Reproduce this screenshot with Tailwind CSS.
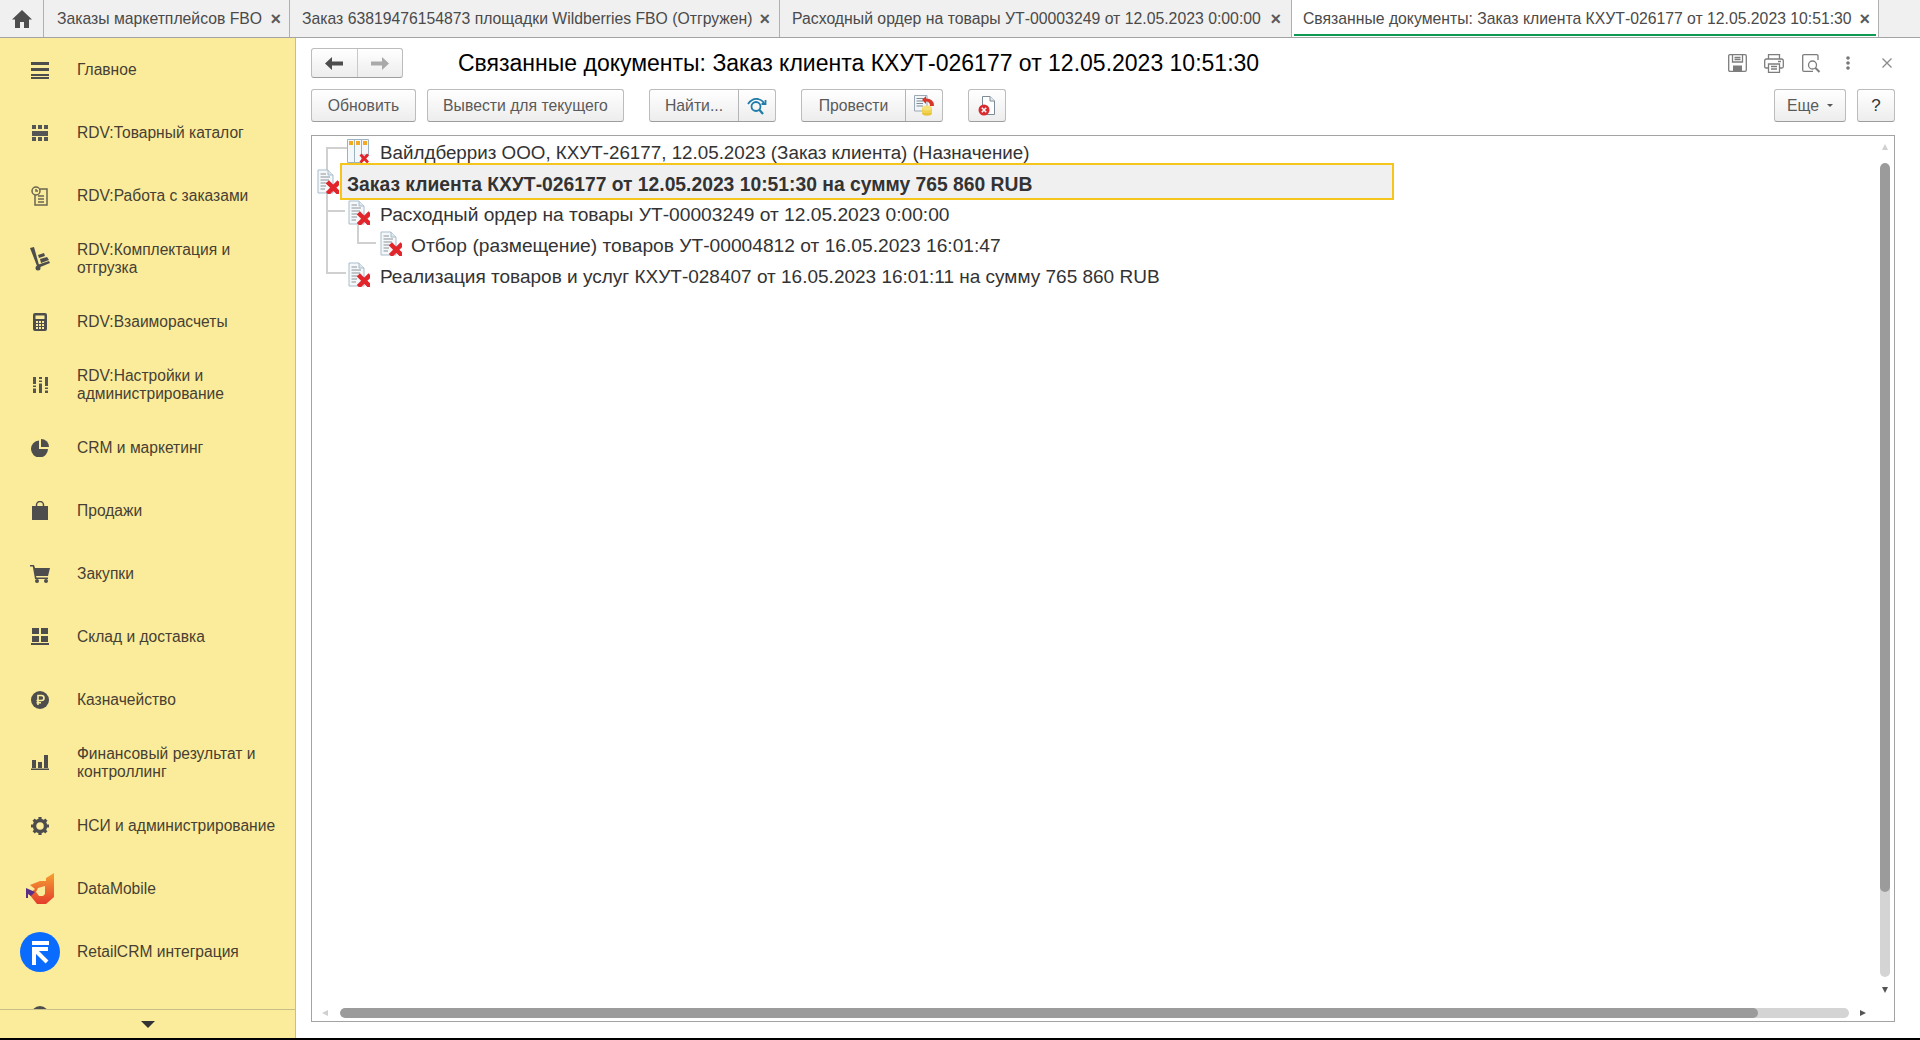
<!DOCTYPE html>
<html lang="ru">
<head>
  <meta charset="UTF-8">
  <title>Связанные документы</title>
  <script src="https://cdn.jsdelivr.net/npm/@tailwindcss/browser@4"></script>
</head>
<body class="w-[1920px] h-[1040px] overflow-hidden flex flex-col bg-white font-['Liberation_Sans',Arial,sans-serif]">
  <svg width="0" height="0" class="absolute">
    <defs>
      <symbol id="doc" viewBox="0 0 22 25">
        <path d="M1 1H11L16 6V24H1Z" fill="#f4f8fb" stroke="#a9bccb"/>
        <path d="M11 1V6H16" fill="#dfe7ee" stroke="#a9bccb"/>
        <path d="M3.5 5H9M3.5 8H13M3.5 11H12M3.5 14H10M3.5 17H9M3.5 20H8" stroke="#8b9298" stroke-width="1.2"/>
        <path d="M12 14.500L20.500 23M20.500 14.500L12 23" stroke="#e2252b" stroke-width="4.500" stroke-linecap="square"/>
      </symbol>
      <symbol id="columns" viewBox="0 0 22 24">
        <path d="M.5.5H7.500V23.500H.5ZM7.500.5H14.500V23.500H7.500ZM14.500.5H21.500V16H14.500Z" fill="#f5f8fa" stroke="#9fb2c0"/>
        <path d="M2 2H6V6H2ZM9 2H13V6H9ZM16 2H20V6H16Z" fill="#f4a91f"/>
        <path d="M13.500 15.500L21 23.500M21 15.500L13.500 23.500" stroke="#e2252b" stroke-width="2.800"/>
      </symbol>
    </defs>
  </svg>

  <!-- вкладки -->
  <div class="h-[38px] shrink-0 flex bg-[#f0f0f0] border-b border-[#a3a3a3] text-[15.750px] text-[#4a4a4a]">
    <div class="w-[44px] flex items-center justify-center border-r border-[#b0b0b0]">
      <svg width="20" height="18" viewBox="0 0 20 18" fill="#4d4d4d"><path d="M10 0L20 9.500H17V18H12V12H8V18H3V9.500H0Z"/></svg>
    </div>
    <div class="w-[246px] flex items-center justify-between pl-[13px] pr-[8px] border-r border-[#b0b0b0]">
      <span>Заказы маркетплейсов FBO</span><span class="text-[18px] font-bold text-[#5a5a5a] leading-none">×</span>
    </div>
    <div class="w-[490px] flex items-center justify-between pl-[12px] pr-[9px] border-r border-[#b0b0b0]">
      <span>Заказ 63819476154873 площадки Wildberries FBO (Отгружен)</span><span class="text-[18px] font-bold text-[#5a5a5a] leading-none">×</span>
    </div>
    <div class="w-[512px] flex items-center justify-between pl-[12px] pr-[10px] border-r border-[#b0b0b0]">
      <span class="text-[15.800px]">Расходный ордер на товары УТ-00003249 от 12.05.2023 0:00:00</span><span class="text-[18px] font-bold text-[#5a5a5a] leading-none">×</span>
    </div>
    <div class="w-[587px] relative bg-white flex items-center justify-between pl-[11px] pr-[8px] border-r border-[#b0b0b0]">
      <span>Связанные документы: Заказ клиента КХУТ-026177 от 12.05.2023 10:51:30</span><span class="text-[18px] font-bold text-[#5a5a5a] leading-none">×</span>
      <div class="absolute left-[2px] right-[2px] bottom-[1px] h-[2px] bg-[#0f9a54]"></div>
    </div>
  </div>

  <div class="flex-1 flex min-h-0">
    <!-- боковая панель -->
    <aside class="w-[296px] shrink-0 flex flex-col bg-[#fbec9c] border-r border-[#c9bf86] text-[15.600px] leading-[18px] text-[#473f33]">
      <nav class="flex-1 overflow-hidden">
        <a class="h-[63px] flex items-center pl-[20px] gap-[17px]"><span class="w-[40px] h-[40px] flex items-center justify-center">
          <svg width="18" height="18" viewBox="0 0 18 18" fill="#4d4d4d"><path d="M0 1H18V4H0ZM0 7H18V10H0ZM0 13H18V15H0ZM0 16H18V18H0Z"/></svg>
        </span>Главное</a>
        <a class="h-[63px] flex items-center pl-[20px] gap-[17px]"><span class="w-[40px] h-[40px] flex items-center justify-center">
          <svg width="16" height="16" viewBox="0 0 16 16" fill="#555"><path d="M0 0H4V4H0ZM6 0H10V4H6ZM12 0H16V4H12ZM0 6H16V11H0ZM0 12H4V16H0ZM6 12H10V16H6ZM12 12H16V16H12Z"/></svg>
        </span>RDV:Товарный каталог</a>
        <a class="h-[63px] flex items-center pl-[20px] gap-[17px]"><span class="w-[40px] h-[40px] flex items-center justify-center">
          <svg width="18" height="20" viewBox="0 0 18 20" fill="none" stroke="#6b6650" stroke-width="1.500"><circle cx="5" cy="5" r="4"/><path d="M5 3V5H7M9 3H16V19H4V9M7 10H13M7 13H13M7 16H13"/></svg>
        </span>RDV:Работа с заказами</a>
        <a class="h-[63px] flex items-center pl-[20px] gap-[17px]"><span class="w-[40px] h-[40px] flex items-center justify-center">
          <svg width="20" height="24" viewBox="0 0 20 24" fill="#4d4d4d"><path d="M0 1L4 0L9 18L7 19Z"/><path d="M7 18L19 14L20 16L8 21Z"/><circle cx="8" cy="21" r="2.500"/><path d="M8 8L14 6L15 9L9 11ZM10 12L17 10L19 13L11 16Z"/></svg>
        </span><span>RDV:Комплектация и<br>отгрузка</span></a>
        <a class="h-[63px] flex items-center pl-[20px] gap-[17px]"><span class="w-[40px] h-[40px] flex items-center justify-center">
          <svg width="14" height="18" viewBox="0 0 14 18" fill="#4d4d4d" fill-rule="evenodd"><path d="M2 0H12Q14 0 14 2V16Q14 18 12 18H2Q0 18 0 16V2Q0 0 2 0ZM2.500 2.500V6H11.500V2.500ZM3 8V10H5V8ZM6 8V10H8V8ZM9 8V10H11V8ZM3 11V13H5V11ZM6 11V13H8V11ZM9 11V13H11V11ZM3 14V16H5V14ZM6 14V16H8V14ZM9 14V16H11V14Z"/></svg>
        </span>RDV:Взаиморасчеты</a>
        <a class="h-[63px] flex items-center pl-[20px] gap-[17px]"><span class="w-[40px] h-[40px] flex items-center justify-center">
          <svg width="15" height="16" viewBox="0 0 15 16" fill="#555"><path d="M0 0H3V7H0ZM0 8.500H3V10H0ZM0 11.500H3V16H0ZM6 0H9V2H6ZM6 3.500H9V5H6ZM6 6.500H9V16H6ZM12 0H15V9H12ZM12 10.500H15V12H12ZM12 13.500H15V16H12Z"/></svg>
        </span><span>RDV:Настройки и<br>администрирование</span></a>
        <a class="h-[63px] flex items-center pl-[20px] gap-[17px]"><span class="w-[40px] h-[40px] flex items-center justify-center">
          <svg width="18" height="18" viewBox="0 0 18 18" fill="#4d4d4d"><path d="M8 1.500V10H17A8.500 8.500 0 1 1 8 1.500Z"/><path d="M10 0A8 8 0 0 1 18 8H10Z"/></svg>
        </span>CRM и маркетинг</a>
        <a class="h-[63px] flex items-center pl-[20px] gap-[17px]"><span class="w-[40px] h-[40px] flex items-center justify-center">
          <svg width="16" height="19" viewBox="0 0 16 19" fill="#4d4d4d"><path d="M0 5H16V19H0Z"/><path d="M4.500 7V4A3.500 3.500 0 0 1 11.500 4V7" fill="none" stroke="#4d4d4d" stroke-width="1.500"/></svg>
        </span>Продажи</a>
        <a class="h-[63px] flex items-center pl-[20px] gap-[17px]"><span class="w-[40px] h-[40px] flex items-center justify-center">
          <svg width="20" height="18" viewBox="0 0 20 18" fill="#4d4d4d"><path d="M0 0H4L5 3H20L18 11H6L6.500 12.500H18V14H5L2.800 1.500H0Z"/><circle cx="7" cy="16" r="2"/><circle cx="16" cy="16" r="2"/></svg>
        </span>Закупки</a>
        <a class="h-[63px] flex items-center pl-[20px] gap-[17px]"><span class="w-[40px] h-[40px] flex items-center justify-center">
          <svg width="18" height="17" viewBox="0 0 18 17" fill="#4d4d4d"><path d="M1 0H8V6H1ZM10 0H17V6H10ZM1 8H8V14H1ZM10 8H17V14H10ZM0 15H18V17H0Z"/></svg>
        </span>Склад и доставка</a>
        <a class="h-[63px] flex items-center pl-[20px] gap-[17px]"><span class="w-[40px] h-[40px] flex items-center justify-center">
          <svg width="18" height="18" viewBox="0 0 18 18"><circle cx="9" cy="9" r="9" fill="#4d4d4d"/><path d="M7 14V4.500H10.500A2.500 2.500 0 0 1 10.500 9.500H5.500M5.500 11.700H10" fill="none" stroke="#fbec9c" stroke-width="1.600"/></svg>
        </span>Казначейство</a>
        <a class="h-[63px] flex items-center pl-[20px] gap-[17px]"><span class="w-[40px] h-[40px] flex items-center justify-center">
          <svg width="18" height="15" viewBox="0 0 18 15" fill="#4d4d4d"><path d="M1 5H5V13H1ZM7 7H11V13H7ZM13 0H17V13H13ZM0 13.500H18V15H0Z"/></svg>
        </span><span>Финансовый результат и<br>контроллинг</span></a>
        <a class="h-[63px] flex items-center pl-[20px] gap-[17px]"><span class="w-[40px] h-[40px] flex items-center justify-center">
          <svg width="18" height="18" viewBox="0 0 18 18"><circle cx="9" cy="9" r="5.500" fill="none" stroke="#4d4d4d" stroke-width="3.500"/><path d="M9 0V18M0 9H18M2.600 2.600L15.400 15.400M15.400 2.600L2.600 15.400" stroke="#4d4d4d" stroke-width="3.200" stroke-dasharray="3.500 11 3.500 11"/></svg>
        </span>НСИ и администрирование</a>
        <a class="h-[63px] flex items-center pl-[20px] gap-[17px]"><span class="w-[40px] h-[40px] flex items-center justify-center">
          <svg width="28" height="32" viewBox="0 0 28 32">
            <defs><linearGradient id="dm" x1="0" y1="0" x2="0" y2="1"><stop offset="0" stop-color="#f5a133"/><stop offset="1" stop-color="#e43d2c"/></linearGradient></defs>
            <path fill="url(#dm)" fill-rule="evenodd" d="M28 0V24L20 31H11L3 21L9 16L4 12L14 8H20V5ZM12 15L19 13V21L17 23H13L10 19Z"/>
            <path fill="#5b2f86" d="M0 15L9 19L5 23L2 21V25L0 25Z"/>
          </svg>
        </span>DataMobile</a>
        <a class="h-[63px] flex items-center pl-[20px] gap-[17px]"><span class="w-[40px] h-[40px] flex items-center justify-center">
          <svg width="40" height="40" viewBox="0 0 40 40"><circle cx="20" cy="20" r="20" fill="#0a6cff"/><path d="M12 9H29V13H12Z" fill="#fff"/><path d="M14 34V18H28M14 18L27 31" transform="translate(0 -1)" fill="none" stroke="#fff" stroke-width="4"/></svg>
        </span>RetailCRM интеграция</a>
        <a class="h-[63px] flex items-center pl-[20px] gap-[17px]"><span class="w-[40px] h-[40px] flex items-center justify-center">
          <svg width="18" height="18" viewBox="0 0 18 18"><circle cx="9" cy="9" r="9" fill="#4d4d4d"/></svg>
        </span></a>
      </nav>
      <div class="h-[29px] shrink-0 flex items-center justify-center border-t border-[#c9bf86]">
        <span class="w-0 h-0 border-x-[7px] border-x-transparent border-t-[7px] border-t-[#333]"></span>
      </div>
    </aside>

    <!-- форма -->
    <main class="flex-1 min-w-0 flex flex-col pl-[15px] pr-[25px] pt-[10px] pb-[16px]">
      <div class="h-[30px] shrink-0 flex items-center">
        <div class="w-[92px] h-[30px] flex rounded-[3px] border border-[#bcbcbc] border-b-[#9d9d9d] bg-gradient-to-b from-white to-[#ededed]">
          <span class="flex-1 flex items-center justify-center border-r border-[#c9c9c9]">
            <svg width="18" height="13" viewBox="0 0 18 13" fill="#4d4d4d"><path d="M7 0V4.500H18V8.500H7V13L0 6.500Z"/></svg>
          </span>
          <span class="flex-1 flex items-center justify-center">
            <svg width="18" height="13" viewBox="0 0 18 13" fill="#a9a9a9"><path d="M11 0V4.500H0V8.500H11V13L18 6.500Z"/></svg>
          </span>
        </div>
        <h1 class="ml-[55px] text-[23px] font-normal text-black whitespace-nowrap">Связанные документы: Заказ клиента КХУТ-026177 от 12.05.2023 10:51:30</h1>
        <div class="ml-auto flex items-center">
          <span class="w-[37px] flex justify-center">
            <svg width="19" height="18" viewBox="0 0 19 18" fill="none" stroke="#7d7d7d" stroke-width="1.300"><path d="M2 .7H17Q18.300 .7 18.300 2V16Q18.300 17.300 17 17.300H2Q.7 17.300 .7 16V2Q.7 .7 2 .7Z"/><path d="M4.500 1V8H14.500V1M6.500 3.500H12.500M6.500 5.500H12.500"/><path d="M5 11.500H14V17H5Z" fill="#7d7d7d" stroke="none"/></svg>
          </span>
          <span class="w-[37px] flex justify-center">
            <svg width="20" height="19" viewBox="0 0 20 19" fill="none" stroke="#7d7d7d" stroke-width="1.300"><path d="M4.500 5V.7H15.500V5"/><path d="M4 14H2Q.7 14 .7 12.500V7Q.7 5 2.500 5H17.500Q19.300 5 19.300 7V12.500Q19.300 14 18 14H16"/><path d="M4.500 10H15.500V18.300H4.500ZM7 12.500H13M7 15H13M14 7.500H17"/></svg>
          </span>
          <span class="w-[37px] flex justify-center">
            <svg width="19" height="19" viewBox="0 0 19 19" fill="none" stroke="#7d7d7d" stroke-width="1.300"><path d="M16 6V2Q16 .7 14.700 .7H2Q.7 .7 .7 2V16Q.7 17.300 2 17.300H11"/><circle cx="10.500" cy="11" r="4"/><path d="M13.500 14L17.500 18" stroke-width="2"/></svg>
          </span>
          <span class="w-[37px] flex justify-center">
            <svg width="4" height="14" viewBox="0 0 4 14" fill="#777"><circle cx="2" cy="2" r="1.800"/><circle cx="2" cy="7" r="1.800"/><circle cx="2" cy="12" r="1.800"/></svg>
          </span>
          <span class="w-[16px] ml-[12.500px] flex justify-center">
            <svg width="10" height="10" viewBox="0 0 10 10" stroke="#8a8a8a" stroke-width="1.300"><path d="M.5.5L9.500 9.500M9.500.5L.5 9.500"/></svg>
          </span>
        </div>
      </div>

      <div class="mt-[11px] h-[33px] shrink-0 flex text-[15.750px] text-[#5a5a5a]">
        <button class="w-[105px] rounded-[3px] border border-[#bcbcbc] border-b-[#9d9d9d] bg-gradient-to-b from-white to-[#ededed]">Обновить</button>
        <button class="ml-[11px] w-[197px] rounded-[3px] border border-[#bcbcbc] border-b-[#9d9d9d] bg-gradient-to-b from-white to-[#ededed]">Вывести для текущего</button>
        <div class="ml-[25px] w-[127px] flex rounded-[3px] border border-[#bcbcbc] border-b-[#9d9d9d] bg-gradient-to-b from-white to-[#ededed]">
          <span class="w-[89px] flex items-center justify-center border-r border-[#b5b5b5]">Найти...</span>
          <span class="flex-1 flex items-center justify-center">
            <svg width="20" height="18" viewBox="0 0 20 18" fill="none" stroke="#1f7ba8" stroke-width="1.800"><circle cx="9" cy="9.500" r="4.500"/><path d="M12.500 13L16 17" stroke-width="2.300"/><path d="M1 7Q5 1 11 2Q15 3 17 6"/><path d="M18.500 3V7H14.500"/></svg>
          </span>
        </div>
        <div class="ml-[25px] w-[142px] flex rounded-[3px] border border-[#bcbcbc] border-b-[#9d9d9d] bg-gradient-to-b from-white to-[#ededed]">
          <span class="w-[104px] flex items-center justify-center border-r border-[#b5b5b5]">Провести</span>
          <span class="flex-1 flex items-center justify-center">
            <svg width="21" height="21" viewBox="0 0 21 21"><path d="M.5.5H13V16H.5Z" fill="#f2f6f9" stroke="#9aa9b5"/><path d="M2.500 3.500H11M2.500 6H9M2.500 8.500H9M2.500 11H9" stroke="#7f8b95"/><ellipse cx="13" cy="18" rx="5" ry="2.800" fill="#e8c43c"/><path d="M8 13H18V18H8Z" fill="#f0d24e"/><ellipse cx="13" cy="13" rx="5" ry="2.500" fill="#f6e27a"/><path d="M12 1L8 5L12 9V6.500Q16 6.500 16 11H20Q20 3.500 12 3.500Z" fill="#d9362a"/></svg>
          </span>
        </div>
        <button class="ml-[25px] w-[38px] flex items-center justify-center rounded-[3px] border border-[#bcbcbc] border-b-[#9d9d9d] bg-gradient-to-b from-white to-[#ededed]">
          <svg width="18" height="20" viewBox="0 0 18 20"><path d="M4.500.5H12L16.500 5V18.500H4.500Z" fill="#fff" stroke="#7c8b97"/><path d="M12 .5V5H16.500" fill="#e6ecf1" stroke="#7c8b97"/><circle cx="6" cy="14" r="5.500" fill="#d92b2f"/><path d="M3.800 11.800L8.200 16.200M8.200 11.800L3.800 16.200" stroke="#fff" stroke-width="1.500"/></svg>
        </button>
        <button class="ml-auto w-[72px] flex items-center justify-center gap-[8px] rounded-[3px] border border-[#bcbcbc] border-b-[#9d9d9d] bg-gradient-to-b from-white to-[#ededed]">Еще<span class="w-0 h-0 border-x-[3px] border-x-transparent border-t-[3px] border-t-[#555]"></span></button>
        <button class="ml-[11px] w-[38px] rounded-[3px] border border-[#bcbcbc] border-b-[#9d9d9d] bg-gradient-to-b from-white to-[#ededed] text-[#333] text-[17px]">?</button>
      </div>

      <!-- дерево документов -->
      <div class="mt-[13px] flex-1 min-h-0 relative border border-[#a3a3a3] pt-[2px] text-[19px] text-[#333] overflow-hidden">
        <svg class="absolute left-0 top-0" width="120" height="150" fill="none" stroke="#d0d0d0" stroke-width="2">
          <path d="M15 34V12H35"/>
          <path d="M15 57V137H34"/>
          <path d="M15 75H33"/>
          <path d="M46 89V107H64"/>
        </svg>
        <div class="relative h-[31px] flex items-center pl-[35px] gap-[11px] text-[18.800px]">
          <svg class="shrink-0 -translate-y-[3px]" width="22" height="24"><use href="#columns"/></svg>Вайлдберриз ООО, КХУТ-26177, 12.05.2023 (Заказ клиента) (Назначение)
        </div>
        <div class="relative h-[31px] flex items-end pl-[5px]">
          <svg class="shrink-0 self-center -translate-y-[3px]" width="22" height="25"><use href="#doc"/></svg>
          <div class="ml-[1px] w-[1054px] h-[37px] flex items-center pl-[5px] pt-[7px] bg-[#f0f0f0] border-2 border-[#f6c51b] font-bold text-[19.300px]">Заказ клиента КХУТ-026177 от 12.05.2023 10:51:30 на сумму 765 860 RUB</div>
        </div>
        <div class="relative h-[31px] flex items-center pl-[36px] gap-[10px] text-[19.200px]">
          <svg class="shrink-0 -translate-y-[3px]" width="22" height="25"><use href="#doc"/></svg>Расходный ордер на товары УТ-00003249 от 12.05.2023 0:00:00
        </div>
        <div class="relative h-[31px] flex items-center pl-[68px] gap-[9px] text-[19.200px]">
          <svg class="shrink-0 -translate-y-[3px]" width="22" height="25"><use href="#doc"/></svg>Отбор (размещение) товаров УТ-00004812 от 16.05.2023 16:01:47
        </div>
        <div class="relative h-[31px] flex items-center pl-[36px] gap-[10px]">
          <svg class="shrink-0 -translate-y-[3px]" width="22" height="25"><use href="#doc"/></svg>Реализация товаров и услуг КХУТ-028407 от 16.05.2023 16:01:11 на сумму 765 860 RUB
        </div>
        <!-- полосы прокрутки -->
        <div class="absolute right-[4px] top-[8px] bottom-[4px] w-[10px] flex flex-col items-center">
          <span class="w-0 h-0 border-x-[3px] border-x-transparent border-b-[6px] border-b-[#d0d0d0]"></span>
          <div class="mt-[13px] w-[10px] h-[814px] rounded-full bg-[#d4d4d4] overflow-hidden"><div class="h-[729px] bg-[#9b9b9b] rounded-full"></div></div>
          <span class="mt-[10px] w-0 h-0 border-x-[3px] border-x-transparent border-t-[6px] border-t-[#555]"></span>
        </div>
        <div class="absolute left-[10px] right-[28px] bottom-[3px] h-[10px] flex items-center">
          <span class="w-0 h-0 border-y-[3px] border-y-transparent border-r-[6px] border-r-[#d0d0d0]"></span>
          <div class="ml-[12px] w-[1509px] h-[10px] rounded-full bg-[#d4d4d4] overflow-hidden"><div class="w-[1418px] h-[10px] bg-[#9b9b9b] rounded-full"></div></div>
          <span class="ml-[11px] w-0 h-0 border-y-[3px] border-y-transparent border-l-[6px] border-l-[#555]"></span>
        </div>
      </div>
    </main>
  </div>
  <div class="h-[2px] shrink-0 bg-black"></div>
</body>
</html>
